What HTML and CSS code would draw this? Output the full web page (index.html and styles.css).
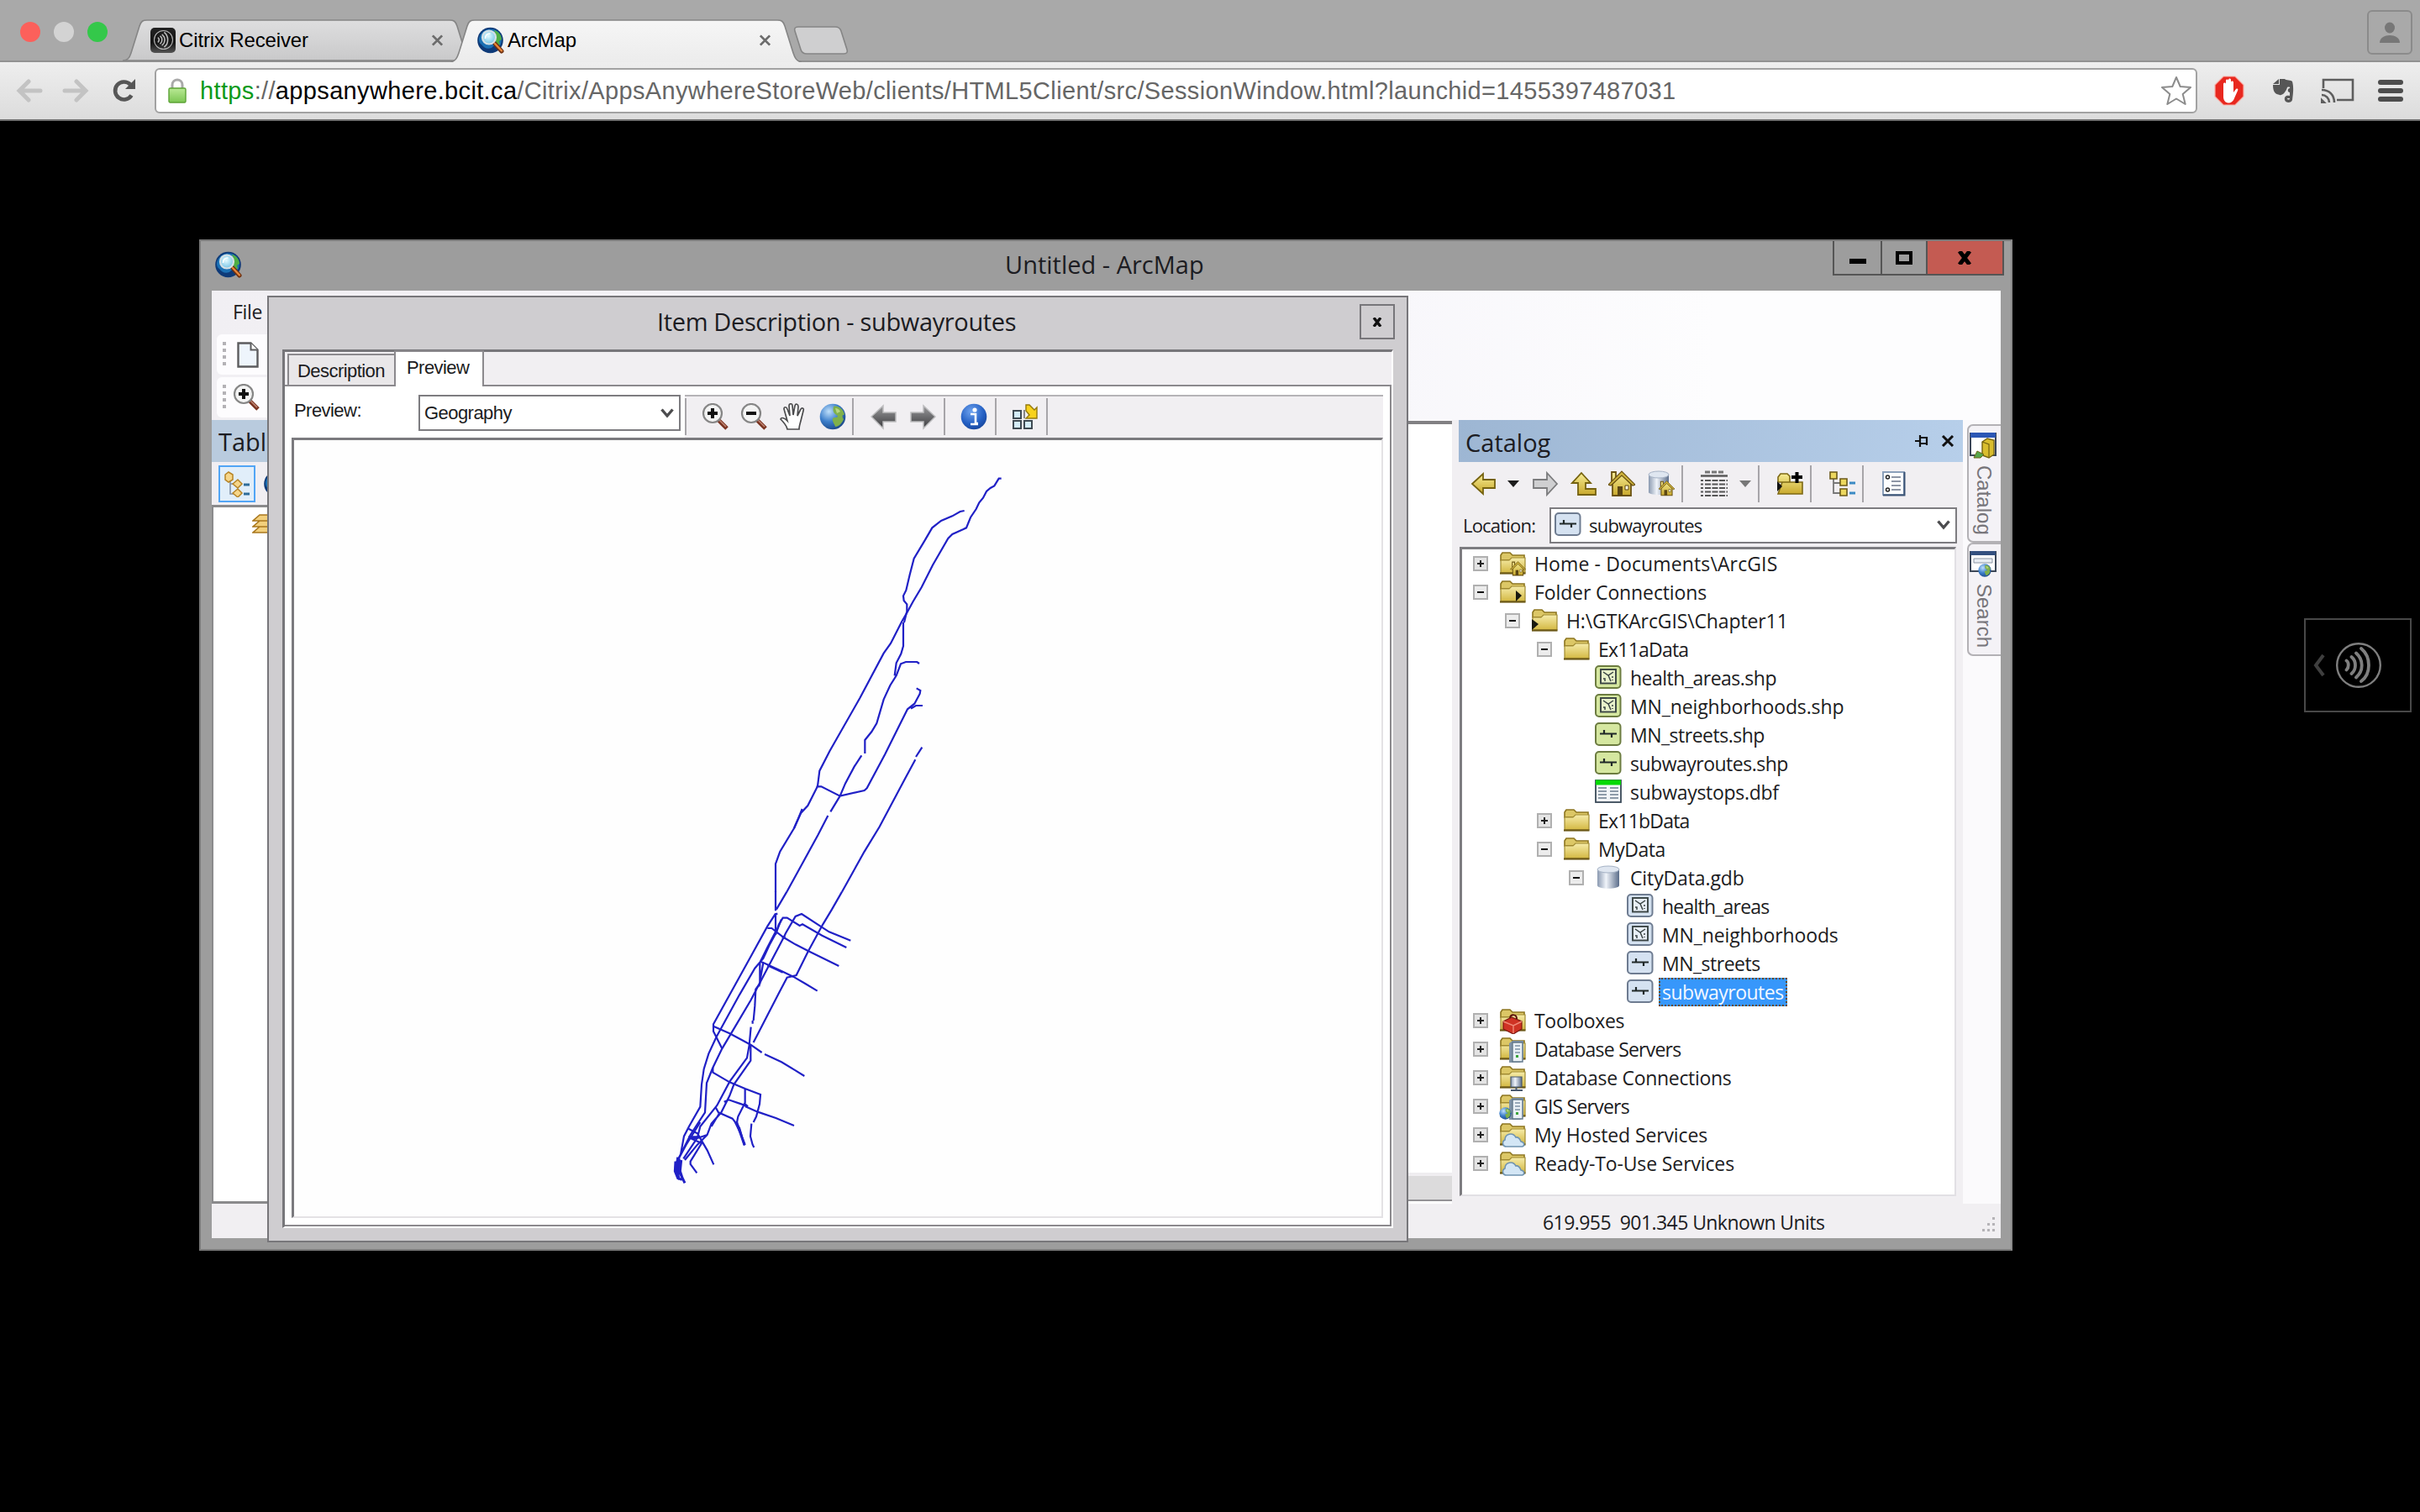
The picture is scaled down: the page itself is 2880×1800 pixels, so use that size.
FILE: index.html
```html
<!DOCTYPE html>
<html lang="en">
<head>
<meta charset="utf-8">
<title>ArcMap</title>
<link rel="stylesheet" href="styles.css">
</head>
<body>
<svg class="defs" aria-hidden="true">
  <defs>
    <linearGradient id="gFolder" x1="0" y1="0" x2="0" y2="1"><stop offset="0" stop-color="#f6ecaa"/><stop offset="1" stop-color="#d3b842"/></linearGradient>
    <linearGradient id="gGold" x1="0" y1="0" x2="0" y2="1"><stop offset="0" stop-color="#f6ec94"/><stop offset="1" stop-color="#c9a92c"/></linearGradient>
    <linearGradient id="gTab" x1="0" y1="0" x2="0" y2="1"><stop offset="0" stop-color="#dededf"/><stop offset="1" stop-color="#c9c9ca"/></linearGradient>
    <linearGradient id="gTabOn" x1="0" y1="0" x2="0" y2="1"><stop offset="0" stop-color="#f6f6f6"/><stop offset="1" stop-color="#ececec"/></linearGradient>
    <linearGradient id="gDb" x1="0" y1="0" x2="1" y2="0"><stop offset="0" stop-color="#8a99b0"/><stop offset=".4" stop-color="#f0f4fa"/><stop offset="1" stop-color="#5b6d8a"/></linearGradient>
    <linearGradient id="gArrow" x1="0" y1="0" x2="0" y2="1"><stop offset="0" stop-color="#9a9a9c"/><stop offset="1" stop-color="#3b3b3e"/></linearGradient>
    <radialGradient id="gGlobe" cx=".35" cy=".3" r=".8"><stop offset="0" stop-color="#bfe0fb"/><stop offset=".5" stop-color="#3d7fcb"/><stop offset="1" stop-color="#17407f"/></radialGradient>
    <radialGradient id="gInfo" cx=".4" cy=".3" r=".8"><stop offset="0" stop-color="#6fa3ee"/><stop offset=".6" stop-color="#2460c4"/><stop offset="1" stop-color="#143f92"/></radialGradient>
    <radialGradient id="gLens" cx=".45" cy=".4" r=".6"><stop offset="0" stop-color="#e4fbff"/><stop offset="1" stop-color="#76c4e6"/></radialGradient>
    <linearGradient id="gLock" x1="0" y1="0" x2="0" y2="1"><stop offset="0" stop-color="#b9e995"/><stop offset="1" stop-color="#7cc653"/></linearGradient>
  </defs>
  <symbol id="arcmap" viewBox="0 0 32 32">
    <circle cx="15.500" cy="16" r="15.300" fill="#0e3a78"/>
    <path d="M3 11C7 2 18 0 25 6c5 5 5 13 1 18-3-3-7-2-9 1-5 2-9 0-12-4C2 19 1 15 3 11z" fill="#1b70b4"/>
    <path d="M20 4c5 1 9 6 9 11l-3 2 1 4-4 0-2-7 1-5z" fill="#4fae45"/>
    <path d="M21 20l8 9" stroke="#6e3010" stroke-width="5" stroke-linecap="round"/><path d="M21 20l8 8.500" stroke="#e8863a" stroke-width="2.400" stroke-linecap="round"/>
    <circle cx="14" cy="12.500" r="8" fill="url(#gLens)" stroke="#d6e0e4" stroke-width="2.200"/>
    <path d="M9.500 14c0-4 2-6 6-6" fill="none" stroke="#fff" stroke-width="1.600"/>
  </symbol>
  <symbol id="folder" viewBox="0 0 32 32">
    <path d="M2 6l2-3h9l3 3h14v6H2z" fill="#dcc766" stroke="#8d7620" stroke-width="1.600"/>
    <path d="M2 12h10l3-3h16v18H2z" fill="url(#gFolder)" stroke="#a08a30" stroke-width="1.200"/>
    <path d="M1 27.500h30.500" stroke="#6b5816" stroke-width="2.200"/>
  </symbol>
  <symbol id="poly" viewBox="0 0 32 32">
    <rect x="1" y="2" width="29.500" height="26" rx="4" class="leaf"/>
    <rect x="7" y="6" width="18" height="16.500" fill="#fff" fill-opacity=".45" stroke="#3a4444" stroke-width="1.900"/>
    <path d="M10 9l6 4 6-4M16 13l3 7M10 17h2v3M20 15h2M12 18v2M21 18v1" stroke="#3a4444" stroke-width="1.500" fill="none"/>
  </symbol>
  <symbol id="line" viewBox="0 0 32 32">
    <rect x="1" y="2" width="29.500" height="26" rx="4" class="leaf"/>
    <path d="M6 14.500h20M11 10v5M20 14v5" stroke="#202828" stroke-width="2.200" fill="none"/>
  </symbol>
  <symbol id="table" viewBox="0 0 32 32">
    <rect x="1" y="2" width="30" height="26" fill="#f2f6f8" stroke="#3a4a58" stroke-width="1.800"/>
    <rect x="1" y="1.500" width="30" height="6" fill="#05d905"/>
    <path d="M4 11h10M4 15h10M4 19h10M4 23h10M18 11h10M18 15h10M18 19h10M18 23h10" stroke="#8d9ba8" stroke-width="1.800"/>
  </symbol>
  <symbol id="gdb" viewBox="0 0 32 32">
    <path d="M3 6v19c0 5 26 5 26 0V6z" fill="url(#gDb)"/><ellipse cx="16" cy="6" rx="13" ry="4" fill="#dfe6f0" stroke="#a5b2c5"/>
  </symbol>
  <symbol id="house" viewBox="0 0 32 32">
    <path d="M4 15V2h5v8M5 16v14h22V16L16 4z" fill="url(#gGold)" stroke="#6b5312" stroke-width="1.800"/>
    <path d="M0 17L16 1l16 16-3 1L16 6 3 18z" fill="#cdb23c" stroke="#6b5312" stroke-width="1.200"/>
    <path d="M11 19h6v11h-6z" fill="#5c4714"/><path d="M20 18h4v5h-4z" fill="#fffbe0" stroke="#5c4714"/>
  </symbol>
  <symbol id="server" viewBox="0 0 32 32">
    <path d="M12 9l4-3h13v22l-4 4H12z" fill="#7f93a6"/><path d="M16 8h12v23H16z" fill="#e9f0f5" stroke="#62788c" stroke-width="1.400"/>
    <path d="M19 12h6M19 16h6M19 20h6" stroke="#7f93a6" stroke-width="1.600"/><path d="M20 23h3v3h-3z" fill="#3aa53a"/>
  </symbol>
  <symbol id="cloud" viewBox="0 0 32 32">
    <path d="M9 30c-5 0-6-6-2-8 0-7 9-10 13-3 4-1 5 3 6 5 5 1 5 6 0 6z" fill="#d3e6f5" stroke="#6f93b0" stroke-width="1.600"/>
  </symbol>
  <symbol id="globe" viewBox="0 0 32 32">
    <circle cx="16" cy="16" r="15.300" fill="url(#gGlobe)"/>
    <path d="M17 4c6-2 12 4 13 10-3-1-3 3-1 5-2 5-6 9-10 9-1-4-4-6-3-10 2-2 6 0 6-3-3-2-7-4-5-11z" fill="#7fb04a"/>
    <path d="M19 6c3 0 5 2 6 4l-4 2z" fill="#b7d680"/>
  </symbol>
  <symbol id="zoomin" viewBox="0 0 32 32">
    <path d="M20 20l10 10" stroke="#7a3321" stroke-width="5"/><path d="M20 19l9 9" stroke="#c08673" stroke-width="1.600"/>
    <circle cx="13" cy="12" r="11" fill="#f4f4f4" stroke="#868686" stroke-width="2.200"/><path d="M7 12h12M13 6v12" stroke="#111" stroke-width="4"/>
  </symbol>
  <symbol id="zoomout" viewBox="0 0 32 32">
    <path d="M20 20l10 10" stroke="#7a3321" stroke-width="5"/><path d="M20 19l9 9" stroke="#c08673" stroke-width="1.600"/>
    <circle cx="13" cy="12" r="11" fill="#f4f4f4" stroke="#868686" stroke-width="2.200"/><path d="M7 12h12" stroke="#111" stroke-width="4"/>
  </symbol>
  <symbol id="hand" viewBox="0 0 32 32">
    <path d="M9 31C8 26 4 22 1 19c1-3 5-1 8 2L5 7c0-3 3-3 4 0l3 8-1-12c0-3 4-3 4 0l1 11 2-11c1-3 4-2 4 1l-1 11 4-8c2-2 4-1 3 2l-3 12c-1 4-2 6-2 10z" fill="#fff" stroke="#4c4c4e" stroke-width="1.700"/>
  </symbol>
  <symbol id="arrL" viewBox="0 0 32 32">
    <path d="M1 16L15 3v8h15v11H15v8z" fill="url(#gArrow)" stroke="#bdbdbf" stroke-width="1.500"/>
  </symbol>
  <symbol id="info" viewBox="0 0 32 32">
    <circle cx="16" cy="16" r="15.300" fill="url(#gInfo)"/><circle cx="17" cy="8" r="2.600" fill="#fff"/>
    <path d="M12 13h6v11h3M12 25h9" fill="none" stroke="#fff" stroke-width="2.600"/>
  </symbol>
  <symbol id="thumb" viewBox="0 0 32 32">
    <path d="M2 9h9v9H2zM2 21h9v9H2zM15 21h9v9h-9z" fill="#d4ecf8" stroke="#3f4a52" stroke-width="2"/><path d="M15 8v10" stroke="#6b6b6b" stroke-width="1.600"/>
    <path d="M17 2h4l6 6 3-3v13H17l4-4-4-5z" fill="#f8d21c" stroke="#94790c" stroke-width="1.400"/>
  </symbol>
  <symbol id="toc" viewBox="0 0 32 32">
    <path d="M8 10v18h9M8 16h9" stroke="#7f8fa5" stroke-width="1.600" fill="none"/>
    <path d="M2 5l4-3 5 3v6l-5 3-4-3zM11 16l6-5 5 5-5 5zM11 27l6-5 5 5-5 5z" fill="#f6d68a" stroke="#b78425" stroke-width="1.500"/>
    <path d="M24 17h7M24 28h7" stroke="#2e6c9a" stroke-width="3"/>
  </symbol>
  <symbol id="treeic" viewBox="0 0 32 32">
    <path d="M6 9v18h8M6 15h8" stroke="#777" stroke-width="1.800" fill="none"/>
    <path d="M2 2h8v8H2zM14 10h8v8h-8zM14 22h8v8h-8z" fill="#ecd75e" stroke="#6b5a18" stroke-width="1.600"/>
    <path d="M25 15h7M25 27h7" stroke="#3c8bc4" stroke-width="3"/>
  </symbol>
  <symbol id="goldL" viewBox="0 0 32 32"><path d="M2 16L15 4v7h14v10H15v7z" fill="url(#gGold)" stroke="#75620f" stroke-width="1.800"/></symbol>
  <symbol id="greyR" viewBox="0 0 32 32"><path d="M30 16L18 3v8H2v10h16v8z" fill="#cfcfd1" stroke="#7b7b7d" stroke-width="1.800"/></symbol>
  <symbol id="up" viewBox="0 0 32 32"><path d="M13 3l11 12h-6v7h12v7H9V15H2z" fill="url(#gGold)" stroke="#75620f" stroke-width="1.800"/></symbol>
  <symbol id="dbhome" viewBox="0 0 32 32">
    <path d="M1 5v21c0 4 24 4 24 0V5z" fill="url(#gDb)"/><ellipse cx="13" cy="5" rx="12" ry="4" fill="#dfe6f0" stroke="#a5b2c5"/>
    <svg x="13" y="12" width="19" height="19"><use href="#house"/></svg>
  </symbol>
  <symbol id="list" viewBox="0 0 34 32">
    <path d="M6 2h24" stroke="#777" stroke-width="3" stroke-dasharray="6 2"/><path d="M1 6.500h32" stroke="#555" stroke-width="2.400"/>
    <path d="M1 12h32M1 16.500h32M1 21h32M1 25.500h32M1 30h32" stroke="#555" stroke-width="2.200" stroke-dasharray="3 2 7 1.500 7 1.500 7 1.500"/>
  </symbol>
  <symbol id="folderadd" viewBox="0 0 32 32">
    <path d="M2 8l3-4h8l3 3v7H2zM2 28l5-14h24v14z" fill="url(#gGold)" stroke="#7e6914" stroke-width="1.600"/>
    <path d="M1 13l6 6-6 6z" fill="#111"/><path d="M18 8h13M24.500 2v13" stroke="#000" stroke-width="4"/>
  </symbol>
  <symbol id="opts" viewBox="0 0 32 32">
    <path d="M4 2h25v27H4z" fill="#fdfeff" stroke="#8ba0bb" stroke-width="2"/><path d="M4 29.500h25.500V2" stroke="#3b5375" stroke-width="2" fill="none"/>
    <circle cx="9.500" cy="8" r="2" fill="none" stroke="#222" stroke-width="1.500"/><circle cx="9.500" cy="23" r="2" fill="none" stroke="#222" stroke-width="1.500"/>
    <path d="M14 8h11M14 13h11M14 18h11M14 23h11" stroke="#8d95a5" stroke-width="1.800"/>
  </symbol>
  <symbol id="chev" viewBox="0 0 16 12"><path d="M1.500 1.500L8 9l6.500-7.500" fill="none" stroke="#4c4c4e" stroke-width="3.400"/></symbol>
  <symbol id="close" viewBox="0 0 16 14"><path d="M2 1l12 12M14 1L2 13" fill="none" stroke="currentColor" stroke-width="3"/></symbol>
  <symbol id="closebold" viewBox="0 0 18 16"><path d="M3 0l12 16M15 0L3 16" fill="none" stroke="currentColor" stroke-width="5"/></symbol>
  <symbol id="bhome" viewBox="0 0 32 32"><use href="#folder"/><svg x="13" y="13" width="19" height="18"><use href="#house"/></svg></symbol>
  <symbol id="bconn" viewBox="0 0 32 32"><use href="#folder"/><path d="M20 14l7 6-7 7z" fill="#1a1a10"/></symbol>
  <symbol id="bconn2" viewBox="0 0 32 32"><use href="#folder"/><path d="M1 14l8 6-8 7z" fill="#1a1a10"/></symbol>
  <symbol id="btool" viewBox="0 0 32 32"><use href="#folder"/><path d="M5 17l10-5 12 5v9l-10 6-12-6z" fill="#cf3324" stroke="#7c1810" stroke-width="1.200"/><path d="M5 17l12 5 10-5M17 22v9" stroke="#f08a78" stroke-width="1.400" fill="none"/><path d="M13 13c1-5 8-5 8 1" stroke="#5a120c" stroke-width="2" fill="none"/></symbol>
  <symbol id="bserv" viewBox="0 0 32 32"><use href="#folder"/><use href="#server"/></symbol>
  <symbol id="bdbc" viewBox="0 0 32 32"><use href="#folder"/><path d="M14 15h13v12H14z" fill="url(#gDb)" stroke="#4a5a70" stroke-width="1.200"/><path d="M20.500 27v4M14 31h14" stroke="#4a5a70" stroke-width="2"/></symbol>
  <symbol id="bgis" viewBox="0 0 32 32"><use href="#folder"/><use href="#server"/><svg x="0" y="17" width="15" height="15"><use href="#globe"/></svg></symbol>
  <symbol id="bcloud" viewBox="0 0 32 32"><use href="#folder"/><use href="#cloud"/></symbol>
  <symbol id="waves" viewBox="0 0 54 54">
    <circle cx="27" cy="27" r="25.800" fill="none" stroke="currentColor" stroke-width="2.400"/>
    <path d="M12.500 21.500c3 2 3 8 0 11M18.500 17c6 5 6 15 0 20M24 12.500c9 8 9 21 0 29M30 7c12 10 12 30 0 39" fill="none" stroke="currentColor" stroke-width="3.800" stroke-linecap="round"/>
  </symbol>
</svg>

<header class="browser">
  <div class="tabstrip">
    <div class="lights"><i class="light-close"></i><i class="light-min"></i><i class="light-max"></i></div>
    <div class="tab">
      <svg class="tab-shape" viewBox="0 0 418 50"><path d="M0 49C6 49 8 46 10 40L20 8C22 2 24 1 29 1H389C394 1 396 2 398 8L408 40C410 46 412 49 418 49z" fill="url(#gTab)" stroke="#858585" stroke-width="1.600"/></svg>
      <span class="fav-citrix"><svg><use href="#waves"/></svg></span>
      <span class="tab-title">Citrix Receiver</span>
      <svg class="tab-x"><use href="#close"/></svg>
    </div>
    <div class="tab on">
      <svg class="tab-shape" viewBox="0 0 418 51"><path d="M0 51C6 50 8 46 10 40L20 8C22 2 24 1 29 1H389C394 1 396 2 398 8L408 40C410 46 412 50 418 51" fill="url(#gTabOn)" stroke="#858585" stroke-width="1.600"/></svg>
      <svg class="fav"><use href="#arcmap"/></svg>
      <span class="tab-title">ArcMap</span>
      <svg class="tab-x"><use href="#close"/></svg>
    </div>
    <svg class="newtab" viewBox="0 0 66 34"><path d="M6 1H50C54 1 56 3 57 6L64 28C65 31 64 33 60 33H16C12 33 10 31 9 28L2 6C1 3 2 1 6 1z" fill="#cfcfd0" stroke="#858585" stroke-width="1.600"/></svg>
    <div class="person"><svg viewBox="0 0 24 26"><ellipse cx="12" cy="7" rx="6" ry="6.500"/><path d="M0 25c0-12 24-12 24 0z"/></svg></div>
  </div>
  <div class="toolbar">
    <svg class="nav-ic" viewBox="0 0 32 28"><path d="M15 3L4 14l11 11M5 14h24" fill="none" stroke="#c3c3c3" stroke-width="5" stroke-linecap="round"/></svg>
    <svg class="nav-ic fwd" viewBox="0 0 32 28"><path d="M17 3l11 11-11 11M27 14H3" fill="none" stroke="#c3c3c3" stroke-width="5" stroke-linecap="round"/></svg>
    <svg class="reload" viewBox="0 0 28 28"><path d="M22.500 19.500A10.500 10.500 0 1 1 21 6.500" fill="none" stroke="#565656" stroke-width="4.600"/><path d="M27 0v12H15z" fill="#565656"/></svg>
    <div class="omnibox">
      <svg class="lock" viewBox="0 0 22 30"><path d="M5 13V8c0-8 12-8 12 0v5" fill="none" stroke="#a9a9a9" stroke-width="3"/><rect x="1" y="12" width="20" height="17" rx="1.500" fill="url(#gLock)" stroke="#5ca336" stroke-width="1.400"/></svg>
      <span class="url"><b class="sec">https</b><b class="dim">://</b>appsanywhere.bcit.ca<b class="dim">/Citrix/AppsAnywhereStoreWeb/clients/HTML5Client/src/SessionWindow.html?launchid=1455397487031</b></span>
      <svg class="star" viewBox="0 0 36 36"><path d="M18 2l4.700 11 12.300 1-9.300 8 3 12L18 27.500 7.300 34l3-12L1 14l12.300-1z" fill="#fff" stroke="#8c8c8c" stroke-width="2" stroke-linejoin="round"/></svg>
    </div>
    <svg class="abp" viewBox="0 0 36 36"><path d="M11 1h14l10 10v14L25 35H11L1 25V11z" fill="#e8281f" stroke="#f8b0a8" stroke-width="1.200"/><path d="M11 22V10c0-2 3-2 3 0v7V6c0-2 3-2 3 0v10V5c0-2 3-2 3 0v11V8c0-2 3-2 3 0v12l3-4c2-1 3 0 2 2l-4 9c-2 7-12 8-13-1z" fill="#fff"/></svg>
    <svg class="ever" viewBox="0 0 26 30"><path d="M8 1v6H1zM9 1h6c1 2 8 1 9 3 2 7 1 15 0 22-1 4-8 4-9 0-1-5 3-6 6-5v3h-3c0 2 3 2 3 0V17c-3 0-3-5 0-5 1-1-1-2-3-1-2 7-7 10-9 9-5-1-8-3-8-12h8z" fill="#565656"/></svg>
    <svg class="cast" viewBox="0 0 40 30"><path d="M3 12V2h35v24H19" fill="none" stroke="#5e5e5e" stroke-width="2.600"/><path d="M1 29v-3l3 3zM1 20c5 0 9 4 9 9M1 14c9 0 15 6 15 15" fill="none" stroke="#5e5e5e" stroke-width="2.600"/></svg>
    <div class="menu"><i></i><i></i><i></i></div>
  </div>
</header>

<main class="session">
  <section class="win">
    <div class="win-title">
      <svg class="win-ic"><use href="#arcmap"/></svg>
      <span class="untitled">Untitled - ArcMap</span>
      <div class="win-btns"><i class="min"></i><i class="max"></i><i class="cls"><svg><use href="#closebold"/></svg></i></div>
    </div>
    <div class="client">
      <div class="menus">
        <div class="menubar"><span class="file">File</span></div>
        <div class="strip"><i class="grip"></i><svg class="doc" viewBox="0 0 26 31"><path d="M1.500 1.500h15l8 8v20h-23z" fill="#eef5fc" stroke="#5c5c5e" stroke-width="2.400"/><path d="M16.500 1.500v8h8" fill="#fff" stroke="#5c5c5e" stroke-width="2"/></svg></div>
        <div class="strip s2"><i class="grip"></i><svg class="ic"><use href="#zoomin"/></svg></div>
      </div>
      <div class="work">
        <aside class="toc">
          <div class="toc-title"><span>Table</span></div>
          <div class="toc-tools"><i class="picked"><svg class="ic"><use href="#toc"/></svg></i><svg class="ic"><use href="#arcmap"/></svg></div>
          <div class="toc-list"><svg class="ic" viewBox="0 0 32 32"><path d="M9 4h20l-8 7H1zM9 11h20l-8 7H1zM9 18h20l-8 7H1z" fill="#f2cf7c" stroke="#a9771d" stroke-width="1.600"/></svg></div>
        </aside>
        <div class="canvas"><div class="hscroll"></div></div>
        <aside class="catalog">
          <div class="cat-title"><span class="cat-name">Catalog</span>
            <svg class="pin" viewBox="0 0 16 14"><path d="M0 7h6M6 0v14M6 3h8v7H6M14 2v10" fill="none" stroke="#111" stroke-width="2.200"/></svg>
            <svg class="cat-x"><use href="#close"/></svg></div>
          <div class="cat-tools">
            <svg class="ic"><use href="#goldL"/></svg><i class="dd k1"></i><svg class="ic k2"><use href="#greyR"/></svg><svg class="ic k3"><use href="#up"/></svg><svg class="ic k4"><use href="#house"/></svg><svg class="ic k2"><use href="#dbhome"/></svg><i class="sep k5"></i><svg class="ic k6"><use href="#list"/></svg><i class="dd muted k7"></i><i class="sep k5"></i><svg class="ic k8"><use href="#folderadd"/></svg><i class="sep k5"></i><svg class="ic k8"><use href="#treeic"/></svg><i class="sep k5"></i><svg class="ic k9"><use href="#opts"/></svg>
          </div>
          <div class="loc"><span class="loc-label">Location:</span><div class="combo"><svg class="ic feature"><use href="#line"/></svg><span class="loc-val">subwayroutes</span><svg class="chev"><use href="#chev"/></svg></div></div>
          <ul class="tree">
            <li><i class="ex plus"></i><svg class="ic"><use href="#bhome"/></svg><span class="wide">Home - Documents\ArcGIS</span></li>
            <li><i class="ex"></i><svg class="ic"><use href="#bconn"/></svg><span>Folder Connections</span></li>
            <li class="l1"><i class="ex"></i><svg class="ic"><use href="#bconn2"/></svg><span>H:\GTKArcGIS\Chapter11</span></li>
            <li class="l2"><i class="ex"></i><svg class="ic"><use href="#folder"/></svg><span class="tighter">Ex11aData</span></li>
            <li class="l3"><i class="no"></i><svg class="ic shape"><use href="#poly"/></svg><span class="tight">health_areas.shp</span></li>
            <li class="l3"><i class="no"></i><svg class="ic shape"><use href="#poly"/></svg><span>MN_neighborhoods.shp</span></li>
            <li class="l3"><i class="no"></i><svg class="ic shape"><use href="#line"/></svg><span class="tight">MN_streets.shp</span></li>
            <li class="l3"><i class="no"></i><svg class="ic shape"><use href="#line"/></svg><span class="tight">subwayroutes.shp</span></li>
            <li class="l3"><i class="no"></i><svg class="ic"><use href="#table"/></svg><span class="snug">subwaystops.dbf</span></li>
            <li class="l2"><i class="ex plus"></i><svg class="ic"><use href="#folder"/></svg><span class="tighter">Ex11bData</span></li>
            <li class="l2"><i class="ex"></i><svg class="ic"><use href="#folder"/></svg><span class="tight">MyData</span></li>
            <li class="l3"><i class="ex"></i><svg class="ic"><use href="#gdb"/></svg><span>CityData.gdb</span></li>
            <li class="l4"><i class="no"></i><svg class="ic feature"><use href="#poly"/></svg><span class="tighter">health_areas</span></li>
            <li class="l4"><i class="no"></i><svg class="ic feature"><use href="#poly"/></svg><span>MN_neighborhoods</span></li>
            <li class="l4"><i class="no"></i><svg class="ic feature"><use href="#line"/></svg><span class="tight">MN_streets</span></li>
            <li class="l4"><i class="no"></i><svg class="ic feature"><use href="#line"/></svg><span class="sel tight">subwayroutes</span></li>
            <li><i class="ex plus"></i><svg class="ic"><use href="#btool"/></svg><span class="snug">Toolboxes</span></li>
            <li><i class="ex plus"></i><svg class="ic"><use href="#bserv"/></svg><span class="tighter">Database Servers</span></li>
            <li><i class="ex plus"></i><svg class="ic"><use href="#bdbc"/></svg><span class="snug">Database Connections</span></li>
            <li><i class="ex plus"></i><svg class="ic"><use href="#bgis"/></svg><span class="tighter">GIS Servers</span></li>
            <li><i class="ex plus"></i><svg class="ic"><use href="#bcloud"/></svg><span>My Hosted Services</span></li>
            <li><i class="ex plus"></i><svg class="ic"><use href="#bcloud"/></svg><span>Ready-To-Use Services</span></li>
          </ul>
        </aside>
        <nav class="side">
          <div class="side-tab"><svg class="ic" viewBox="0 0 32 32"><path d="M1 2h30v26H1z" fill="#fff" stroke="#3b4657" stroke-width="2"/><path d="M1 1h30v6H1z" fill="#2b57b5"/><path d="M15 12l6-4 8 2v17l-6 4-8-3z" fill="#d9bd2e" stroke="#74620f" stroke-width="1.400"/><path d="M15 12l8 3v16" stroke="#74620f" stroke-width="1.200" fill="none"/><path d="M5 31l4-8 8 4-4 4z" fill="#56a64c" stroke="#6d6414"/></svg><span>Catalog</span></div>
          <div class="side-tab two"><svg class="ic" viewBox="0 0 32 32"><path d="M1 2h30v23H1z" fill="#fff" stroke="#3b4657" stroke-width="2"/><path d="M1 1h30v5H1z" fill="#34507f"/><path d="M5 10h22v5H5z" fill="#e9edf2" stroke="#8d97a5"/><svg x="10" y="16" width="16" height="16"><use href="#globe"/></svg></svg><span>Search</span></div>
        </nav>
      </div>
      <div class="status"><span class="coords">619.955&nbsp; 901.345 Unknown Units</span>
        <svg class="sizer" viewBox="0 0 16 18"><path d="M12 0h3v3h-3zM12 7h3v3h-3zM6 7h3v3H6zM12 14h3v3h-3zM6 14h3v3H6zM0 14h3v3H0z" fill="#b5b3b7"/></svg></div>
    </div>
  </section>

  <section class="dialog">
    <div class="dlg-title"><span class="dlg-name">Item Description - subwayroutes</span><i class="dlg-x"><svg><use href="#closebold"/></svg></i></div>
    <div class="frame">
      <div class="tabs"><span class="dtab d1">Description</span><span class="dtab d2">Preview</span></div>
      <div class="page">
        <div class="row">
          <span class="plabel">Preview:</span>
          <div class="combo geo"><span>Geography</span><svg class="chev"><use href="#chev"/></svg></div>
          <div class="tools">
            <i class="sep"></i><svg class="ic m1"><use href="#zoomin"/></svg><svg class="ic m2"><use href="#zoomout"/></svg><svg class="ic m6"><use href="#hand"/></svg><svg class="ic m6"><use href="#globe"/></svg><i class="sep m7"></i><svg class="ic m4"><use href="#arrL"/></svg><svg class="ic flip m2"><use href="#arrL"/></svg><i class="sep m3"></i><svg class="ic m5"><use href="#info"/></svg><i class="sep m3"></i><svg class="ic m5"><use href="#thumb"/></svg><i class="sep m3"></i>
          </div>
        </div>
        <div class="map">
          <svg viewBox="350 523 1294 924">
            <g transform="translate(900 540) scale(.33333)">
              <path d="M875 86H866L850 112 836 120 822 132 810 155 796 172 785 195 765 225 750 262 738 268 700 285 685 300 630 395 590 475 560 525 540 562 520 596 480 675 455 710 370 870 262 1060 226 1130 219 1185 184 1254 160 1280 135 1335 85 1418 69 1462V1562"/>
              <path d="M743 201L728 204 700 220 660 237 628 262 600 310 563 372 548 430 535 485 525 505 527 522 538 535V560L528 600M525 600V684L517 712 500 745 494 790M582 747L574 741H534L516 748 500 790 478 825 455 875 430 960 412 990 388 1020V1068M376 1075L350 1115 318 1175 299 1220M572 835L586 843 584 855 565 890 540 910 510 970 460 1070 395 1192 386 1200 299 1220 232 1186H215M594 897H570L552 908M299 1220L265 1276M256 1290L220 1360 165 1460 109 1562M592 1046L570 1080M568 1090L530 1160 440 1330 385 1420 306 1562M164 1266L150 1300 135 1335"/>
            </g>
            <g transform="translate(780 1040) scale(.33333)">
              <path d="M429 60V130M469 62L432 125M666 62L630 125 598 178 545 275 503 360 470 368 440 425 350 600M429 140L400 185 345 285 207 535V560L238 622M436 140L429 142V205L400 260 373 315V390L358 410 355 470 350 522M347 522V533M429 205L385 300 355 335 300 430 218 580M385 315L370 400M450 160L430 210 400 265 375 310"/>
              <path d="M697 236L620 205 522 141 500 150 465 210 458 225 400 335 340 450 275 560 238 622 205 690 183 745 177 850 125 930 85 1010M682 261L595 218 525 178 515 183 470 155H455L440 180 429 215M655 327L545 273 500 250 458 225 415 192H400M578 416L535 390 492 365 450 345 385 315 375 312M400 325L455 350M207 542L265 568 340 608 380 636M390 642L450 670 500 700 532 720M218 580L190 640 173 695 165 750 160 830 120 900 102 935 90 1000 75 1030"/>
              <path d="M341 545L335 610 327 655 265 740 220 825 160 900 150 940 100 1015M340 608V665L280 750 265 790 235 850 200 890 185 930 150 942 120 940M205 690L205 707 265 742 320 765 375 786 372 820 360 865 350 885M343 890L339 935 347 965 352 975M320 765V815L295 865 290 890M320 820L330 828 300 818 262 805 245 812M320 828L365 848 430 870 495 897M215 832L225 850 275 872 300 905 318 968M282 880L302 920 320 966M227 855L200 900M118 908L150 925 185 985 208 1036M120 940L165 960 125 1025V1035L148 1066M160 885L110 965 80 1020M185 930L150 965 105 1020"/>
              <path d="M80 1010L75 1050 85 1090M85 1015L80 1050 105 1102M72 1025L70 1060 80 1085 95 1090M92 1020L88 1060 98 1090M290 885L318 966M118 938H150M452 225h12" stroke-width="9"/>
            </g>
          </svg>
        </div>
      </div>
    </div>
  </section>

  <div class="handle"><svg class="hchev" viewBox="0 0 14 28"><path d="M12 2L3 14l9 12" fill="none" stroke="#3f3f3f" stroke-width="4"/></svg><svg class="hwave"><use href="#waves"/></svg></div>
</main>
</body>
</html>
```
FILE: styles.css
```css
*, *::before { box-sizing: border-box; }
body { margin: 0; width: 2880px; height: 1800px; overflow: hidden; background: #000; font-family: "Open Sans", "Noto Sans", sans-serif; color: #1c1c22; }
i { display: block; font-style: normal; }
.defs { position: absolute; width: 0; height: 0; }
.ic { width: 32px; height: 32px; flex: none; }

/* browser chrome */
.browser { height: 144px; font-family: "Liberation Sans", Arial, sans-serif; }
.tabstrip { display: flex; height: 72px; padding-top: 23px; background: #a9a9a9; }
.lights { display: flex; gap: 16px; padding: 3px 0 0 24px; width: 146px; flex: none; }
.lights i { width: 24px; height: 24px; border-radius: 50%; }
.light-close { background: #fc605b; }
.light-min { background: #d3d3d3; }
.light-max { background: #34c84a; }
.tab { position: relative; display: flex; width: 418px; height: 49px; padding: 0 0 0 33px; flex: none; align-items: center; }
.tab.on { margin-left: -28px; height: 51px; z-index: 1; padding: 0 0 2px 32px; }
.tab-shape { position: absolute; left: 0; top: 0; width: 418px; height: 50px; }
.tab.on .tab-shape { height: 51px; }
.tab > :not(.tab-shape) { position: relative; }
.fav-citrix { display: flex; width: 30px; height: 30px; border-radius: 5px; background: linear-gradient(#222, #141414 60%, #555); align-items: center; justify-content: center; color: #bbb; }
.fav-citrix svg { width: 23px; height: 23px; }
.fav { width: 32px; height: 32px; }
.tab-title { font-size: 24px; letter-spacing: -.14px; color: #000; line-height: 30px; margin-left: 4px; white-space: nowrap; }
.tab-x { width: 15px; height: 14px; color: #6c6c6c; margin-left: auto; margin-right: 36px; }
.newtab { width: 66px; height: 34px; margin: 8px 0 0 -10px; }
.person { width: 54px; height: 53px; margin: -11px 9px 0 auto; border: 2px solid #8b8b8b; border-radius: 6px; display: flex; align-items: center; justify-content: center; }
.person svg { width: 24px; height: 26px; fill: #777; }
.toolbar { display: flex; align-items: center; height: 72px; border-top: 2px solid #929292; border-bottom: 2px solid #6f6f6f; background: linear-gradient(#eeeeee, #dcdcdc); padding: 0 20px 0 19px; }
.nav-ic { width: 32px; height: 28px; }
.fwd { margin-left: 23px; }
.reload { width: 28px; height: 28px; margin-left: 28px; }
.omnibox { display: flex; align-items: center; width: 2431px; height: 54px; margin-left: 22px; background: #fff; border: 2px solid #a2a2a2; border-radius: 6px; padding: 0 5px 0 14px; flex: none; }
.lock { width: 22px; height: 30px; }
.url { margin-left: 16px; font-size: 29px; letter-spacing: .35px; color: #000; white-space: nowrap; }
.url b { font-weight: normal; }
.sec { color: #0b9a1b; }
.dim { color: #666; }
.star { width: 36px; height: 36px; margin-left: auto; }
.abp { width: 36px; height: 36px; margin-left: 20px; }
.ever { width: 26px; height: 30px; margin-left: 33px; }
.cast { width: 40px; height: 30px; margin-left: 32px; }
.menu { width: 30px; margin-left: auto; display: grid; gap: 4px; }
.menu i { height: 6px; border-radius: 3px; background: #4d4d4d; }

/* remote session */
.session { position: relative; height: 1656px; background: #000; }
.win { position: absolute; left: 237px; top: 141px; width: 2158px; height: 1204px; background: #9d9d9d; border: 2px solid #7a7a7a; border-right-color: #8a8a8a; display: flex; flex-direction: column; padding: 0 12px 13px 13px; }
.win-title { position: relative; height: 59px; flex: none; display: flex; align-items: center; padding-left: 4px; }
.win-ic { width: 32px; height: 32px; margin-top: -4px; }
.untitled { position: absolute; left: 944px; font-size: 29px; line-height: 40px; top: 8px; white-space: nowrap; }
.win-btns { display: flex; margin: 0 -4px 0 auto; align-self: flex-start; height: 41px; border: 2px solid #555; border-top: 0; }
.win-btns i { border-left: 2px solid #555; display: flex; align-items: center; justify-content: center; }
.win-btns .min { width: 55px; border: 0; }
.min::before { content: ""; width: 20px; height: 6px; background: #000; margin-top: 9px; }
.max { width: 54px; }
.max::before { content: ""; width: 20px; height: 16px; border: 4px solid #000; }
.win-btns .cls { width: 91px; background: #c45b52; }
.cls svg { width: 18px; height: 16px; color: #000; margin-right: 2px; }
.client { flex: 1; min-height: 0; display: flex; flex-direction: column; background: #fbfafc; }
.menus { height: 154px; flex: none; background: linear-gradient(90deg, #f1eff3, #f8f7fb 66%, #fdfdfe 84%); }
.menubar { height: 52px; padding: 0 0 3px 25px; display: flex; align-items: center; }
.file { font-size: 23px; letter-spacing: -.3px; }
.strip { display: flex; align-items: center; width: 200px; height: 48px; margin: 0 0 3px 6px; padding-left: 7px; background: #fdfcfe; border-radius: 6px 0 0 6px; }
.grip { width: 4px; height: 30px; background: repeating-linear-gradient(#b4b2b6 0 4px, transparent 4px 8px); }
.doc { width: 26px; height: 31px; margin-left: 13px; }
.s2 .ic { margin-left: 8px; }
.work { flex: 1; min-height: 0; display: flex; }
.toc { width: 240px; background: #f1eff3; display: flex; flex-direction: column; }
.toc-title { height: 50px; background: #b9cbde; padding-left: 8px; font-size: 29px; line-height: 52px; }
.toc-tools { height: 51px; display: flex; padding: 4px 0 0 8px; gap: 10px; align-items: flex-start; }
.picked { width: 44px; height: 44px; border: 2px solid #52a5f5; background: #e1eefa; padding: 4px; }
.toc-tools > .ic { margin-top: 6px; }
.toc-list { flex: 1; border: solid #8a8a8c; border-width: 3px 0 3px 2px; background: #fff; padding: 5px 0 0 46px; }
.canvas { flex: 1; background: #fff; border-top: 4px solid #818083; margin-top: 1px; display: flex; align-items: flex-end; }
.hscroll { width: 100%; height: 34px; background: #dcdbdc; border-top: 4px solid #efedf0; border-bottom: 2px solid #949296; margin-bottom: 3px; }
.catalog { width: 608px; padding-left: 8px; background: #f1eff2; display: flex; flex-direction: column; flex: none; }
.cat-title { height: 50px; flex: none; background: linear-gradient(100deg, #9db6d3, #b7cfea); padding: 0 10px 0 8px; display: flex; align-items: center; }
.cat-name { font-size: 29px; margin-top: 2px; }
.pin { width: 16px; height: 14px; margin-left: auto; }
.cat-x { width: 16px; height: 14px; margin-left: 15px; color: #111; }
.cat-tools { height: 51px; display: flex; align-items: center; padding-left: 14px; flex: none; }
.dd { border: 7px solid transparent; border-top: 8px solid #1c1c1c; border-bottom: 0; }
.muted { border-top-color: #777; }
.k1 { margin-left: 12px; }
.k2 { margin-left: 15px; }
.k3 { margin-left: 14px; }
.k4 { margin-left: 13px; }
.sep { width: 2px; height: 44px; background: #a7a5a9; flex: none; }
.k5 { margin-left: 8px; }
.k6 { width: 34px; margin-left: 20px; }
.k7 { margin-left: 13px; }
.k8 { margin-left: 20px; }
.k9 { margin-left: 19px; }
.loc { display: flex; align-items: center; height: 48px; padding: 0 7px 0 5px; flex: none; }
.loc-label, .loc-val { font-size: 22px; letter-spacing: -.8px; }
.combo { display: flex; align-items: center; height: 43px; border: 2px solid #7d7c80; background: #fff; margin-left: auto; width: 485px; padding: 0 6px 0 4px; }
.loc-val { margin-left: 9px; }
.chev { width: 16px; height: 12px; margin-left: auto; }
.tree { list-style: none; margin: 2px 8px 9px 1px; padding: 0 0 0 13px; flex: 1; background: #fff; border: solid #7d7c80; border-width: 3px 2px 2px 3px; border-right-color: #e2e0e4; border-bottom-color: #e2e0e4; font-size: 23px; letter-spacing: -.12px; }
.tree li { display: flex; align-items: center; height: 34px; white-space: nowrap; }
.ex { position: relative; width: 18px; height: 18px; border: 2px solid #b0b0b0; background: linear-gradient(90deg, #111, #111) center / 8px 2px no-repeat, #ececec; margin-right: 13px; }
.plus { background: linear-gradient(#222, #222) center / 8px 2px no-repeat, linear-gradient(#222, #222) center / 2px 8px no-repeat, #e4e4e4; }
.no { width: 18px; margin-right: 13px; }
.tree span { margin-left: 10px; line-height: 32px; }
.wide { letter-spacing: .12px; }
.snug { letter-spacing: -.3px; }
.tight { letter-spacing: -.5px; }
.tighter { letter-spacing: -.78px; }
.l1 { padding-left: 38px; }
.l2 { padding-left: 76px; }
.l3 { padding-left: 114px; }
.l4 { padding-left: 152px; }
.shape { --leaf: #d5e7a0; --edge: #6c7c40; }
.feature { --leaf: #d5e2f1; --edge: #6e7c91; }
.leaf { fill: var(--leaf); stroke: var(--edge); stroke-width: 2; }
.tree .sel { background: #3797fb; color: #f3f8ff; outline: 2px dotted #6b4a24; outline-offset: -2px; padding: 0 4px; margin-left: 6px; line-height: 34px; }
.side { width: 45px; padding: 5px 0 0 5px; background: #fbfafc; flex: none; }
.side-tab { height: 141px; border: 2px solid #b3b1b5; border-right: 0; border-radius: 7px 0 0 7px; padding: 7px 0 0 1px; background: #f4f2f6; }
.side-tab.two { height: 135px; }
.side-tab span { display: block; writing-mode: vertical-rl; font: 24px/26px "Liberation Sans", Arial, sans-serif; color: #77757a; margin: 3px 0 0 4px; }
.status { height: 41px; flex: none; background: #f1eff2; display: flex; align-items: center; padding: 0 6px 0 1584px; }
.coords { font-size: 23px; letter-spacing: -.57px; white-space: nowrap; margin-top: 2px; }
.sizer { width: 16px; height: 18px; margin: 8px 0 0 auto; }

/* item description */
.dialog { position: absolute; left: 318px; top: 208px; width: 1358px; height: 1127px; border: 2px solid #77767a; background: #cfcdd0; display: flex; flex-direction: column; padding: 0 16px 15px; }
.dlg-title { position: relative; height: 62px; flex: none; display: flex; align-items: center; }
.dlg-name { position: absolute; left: 446px; font-size: 29px; letter-spacing: -.36px; line-height: 40px; top: 9px; white-space: nowrap; }
.dlg-x { width: 42px; height: 42px; border: 2px solid #77767a; display: flex; align-items: center; justify-content: center; margin: -4px -2px 0 auto; }
.dlg-x svg { width: 12px; height: 11px; color: #111; }
.frame { flex: 1; min-height: 0; display: flex; flex-direction: column; border: 3px solid #77767a; border-right: 2px solid #fff; border-bottom: 2px solid #fff; background: #fff; font: 22px "Liberation Sans", Arial, sans-serif; letter-spacing: -.55px; }
.tabs { height: 41px; flex: none; display: flex; align-items: flex-end; background: #f1eff2; border-bottom: 2px solid #8b898d; padding-left: 3px; }
.dtab { border: 2px solid #8b898d; }
.d1 { width: 127px; height: 37px; border-bottom: 0; background: #e9e7e9; padding-left: 10px; line-height: 38px; border-right: 0; }
.d2 { width: 107px; height: 43px; border-bottom: 0; background: #fff; padding-left: 13px; line-height: 38px; margin-bottom: -2px; }
.page { flex: 1; min-height: 0; display: flex; flex-direction: column; border: solid #8b898d; border-width: 0 2px 2px 0; padding: 10px 8px 8px; }
.row { display: flex; height: 51px; flex: none; }
.plabel { width: 151px; padding: 6px 0 0 3px; }
.combo.geo { width: 312px; margin: 0; padding: 0 6px 0 5px; }
.tools { flex: 1; margin-left: 5px; border-top: 2px solid #b5b3b7; background: #f1eff2; display: flex; align-items: center; padding-bottom: 2px; }
.m1 { margin-left: 18px; }
.m2 { margin-left: 14px; }
.m3 { margin-left: 9px; }
.m4 { margin-left: 20px; }
.m5 { margin-left: 18px; }
.m6 { margin-left: 15px; }
.m7 { margin-left: 7px; }
.flip { transform: scaleX(-1); }
.map { flex: 1; min-height: 0; border: 3px solid #7b7a7e; border-right: 2px solid #e4e2e5; border-bottom: 2px solid #e4e2e5; background: #fefefe; }
.map svg { display: block; width: 100%; height: 100%; fill: none; stroke: #2020c6; stroke-width: 6.6; }

.handle { position: absolute; left: 2742px; top: 592px; width: 128px; height: 112px; border: 2px solid #484848; display: flex; align-items: center; padding-left: 9px; color: #7f7f7f; }
.hchev { width: 14px; height: 28px; }
.hwave { width: 54px; height: 54px; margin-left: 13px; }
```
